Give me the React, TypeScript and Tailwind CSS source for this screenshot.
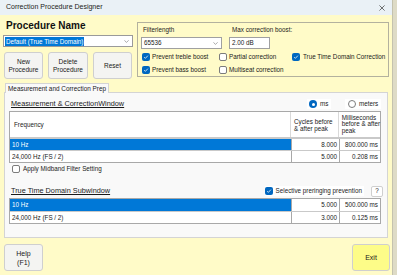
import React from "react";

type Row = { freq: string; cycles: string; ms: string };

const mainRows: Row[] = [
  { freq: "10 Hz", cycles: "8.000", ms: "800.000 ms" },
  { freq: "24,000 Hz (FS / 2)", cycles: "5.000", ms: "0.208 ms" },
];

const subRows: Row[] = [
  { freq: "10 Hz", cycles: "5.000", ms: "500.000 ms" },
  { freq: "24,000 Hz (FS / 2)", cycles: "3.000", ms: "0.125 ms" },
];

function Check({ checked }: { checked?: boolean }) {
  return checked ? (
    <span className="flex h-[8px] w-[8px] shrink-0 items-center justify-center rounded-[2px] bg-[#0067c0]">
      <svg viewBox="0 0 8 8" className="h-[6px] w-[6px]">
        <path d="M1.5 4.2 L3.2 5.8 L6.5 2.2" fill="none" stroke="white" strokeWidth="1" />
      </svg>
    </span>
  ) : (
    <span className="h-[8px] w-[8px] shrink-0 rounded-[2px] border border-[#7c7c7c] bg-white" />
  );
}

function Radio({ selected }: { selected?: boolean }) {
  return selected ? (
    <span className="flex h-[8px] w-[8px] shrink-0 items-center justify-center rounded-full bg-[#0067c0]">
      <span className="h-[3px] w-[3px] rounded-full bg-white" />
    </span>
  ) : (
    <span className="h-[8px] w-[8px] shrink-0 rounded-full border border-[#7c7c7c] bg-white" />
  );
}

function Chevron() {
  return (
    <svg viewBox="0 0 8 5" className="h-[3px] w-[5px] shrink-0">
      <path d="M0.5 0.5 L4 4 L7.5 0.5" fill="none" stroke="#606060" strokeWidth="0.9" />
    </svg>
  );
}

function WinButton({ children, className }: { children: React.ReactNode; className?: string }) {
  return (
    <button
      type="button"
      className={
        "flex flex-col items-center justify-center rounded-[3px] border border-[#cfcfcf] text-[6.5px] leading-[8px] text-[#1a1a1a] " +
        (className ?? "bg-[#f4f4f2]")
      }
    >
      {children}
    </button>
  );
}

function DataRows({ rows }: { rows: Row[] }) {
  return (
    <>
      {rows.map((row, i) => (
        <div key={row.freq} className="flex h-[12px] border-t border-[#c9c9c9] first:border-t-0">
          <div
            className={
              "flex w-[281px] items-center pl-[2px] " +
              (i === 0 ? "bg-[#0078d7] text-white" : "bg-white text-[#1a1a1a]")
            }
          >
            {row.freq}
          </div>
          <div className="flex w-[48px] items-center justify-end border-l border-[#a8a8a8] bg-white pr-[2px]">
            {row.cycles}
          </div>
          <div className="flex flex-1 items-center justify-end border-l border-[#a8a8a8] bg-white pr-[2px]">
            {row.ms}
          </div>
        </div>
      ))}
    </>
  );
}

export default function App() {
  return (
    <div className="flex h-[275px] w-[397px] overflow-hidden bg-[#dedbc6] font-['Liberation_Sans',Arial,sans-serif] text-[6.3px] text-[#1a1a1a]">
      <div className="flex w-[393px] flex-col border-r border-[#c4c2ae] bg-[#fffbc8]">
        {/* Title bar */}
        <div className="flex h-[15px] shrink-0 items-center justify-between bg-[#eaf1f6] pl-[6px] pr-[7px]">
          <span className="text-[7px] text-[#222]">Correction Procedure Designer</span>
          <svg viewBox="0 0 7 7" className="h-[6px] w-[6px]">
            <path d="M0.5 0.5 L6.5 6.5 M6.5 0.5 L0.5 6.5" stroke="#333" strokeWidth="0.8" />
          </svg>
        </div>

        {/* Top section */}
        <div className="flex h-[65px] shrink-0 pl-[3px] pr-[3px]">
          <div className="flex w-[130px] flex-col">
            <div className="mt-[5px] h-[12px] pl-[3px] text-[10px] font-bold leading-[12px] text-[#111]">
              Procedure Name
            </div>
            <div className="mt-[3px] flex h-[12px] items-center justify-between border border-[#9a9a9a] bg-white pl-[1px] pr-[3px]">
              <span className="bg-[#0078d7] px-[1px] leading-[9px] text-white">Default (True Time Domain)</span>
              <Chevron />
            </div>
            <div className="mt-[5px] flex h-[27px] gap-[5px] pl-[1px]">
              <WinButton className="w-[39px] bg-[#f4f4f2]">
                <span>New</span>
                <span>Procedure</span>
              </WinButton>
              <WinButton className="w-[40px] bg-[#f4f4f2]">
                <span>Delete</span>
                <span>Procedure</span>
              </WinButton>
              <WinButton className="w-[39px] bg-[#f4f4f2]">
                <span>Reset</span>
              </WinButton>
            </div>
          </div>

          {/* Filter settings group */}
          <div className="ml-[4px] mt-[7px] flex h-[55px] flex-1 flex-col border border-[#b3b19e] pl-[3px]">
            <div className="mt-[3px] flex h-[8px] items-center leading-[8px]">
              <span className="w-[88px] pl-[2px]">Filterlength</span>
              <span className="pl-[3px]">Max correction boost:</span>
            </div>
            <div className="mt-[3px] flex h-[12px] gap-[7px]">
              <div className="flex w-[81px] items-center justify-between border border-[#a0a0a0] bg-white pl-[2px] pr-[3px]">
                <span>65536</span>
                <Chevron />
              </div>
              <div className="flex w-[41px] items-center border border-[#a0a0a0] bg-white pl-[2px]">2.00 dB</div>
            </div>
            <div className="mt-[3px] flex h-[10px] items-center whitespace-nowrap pl-[1px]">
              <div className="flex w-[77px] items-center gap-[2px]">
                <Check checked />
                <span>Prevent treble boost</span>
              </div>
              <div className="flex w-[73px] items-center gap-[2px]">
                <Check />
                <span>Partial correction</span>
              </div>
              <div className="flex items-center gap-[3px]">
                <Check checked />
                <span>True Time Domain Correction</span>
              </div>
            </div>
            <div className="mt-[3px] flex h-[10px] items-center whitespace-nowrap pl-[1px]">
              <div className="flex w-[77px] items-center gap-[2px]">
                <Check checked />
                <span>Prevent bass boost</span>
              </div>
              <div className="flex items-center gap-[2px]">
                <Check />
                <span>Multiseat correction</span>
              </div>
            </div>
          </div>
        </div>

        {/* Tab strip */}
        <div className="mt-[2px] flex h-[10px] shrink-0 pl-[5px]">
          <div className="relative top-[1px] flex items-center border border-b-0 border-[#d4d4d4] bg-[#f9f9f9] px-[2px] text-[6.4px]">
            Measurement and Correction Prep
          </div>
        </div>

        {/* Tab panel */}
        <div className="mx-[4px] flex h-[146px] shrink-0 flex-col border border-[#d4d4d4] bg-[#f9f9f9] pl-[4px] pr-[6px]">
          <div className="mt-[5px] flex h-[12px] items-center">
            <span className="pl-[2px] text-[7.3px] underline">Measurement &amp; CorrectionWindow</span>
            <div className="ml-auto flex items-center">
              <div className="flex h-[10px] w-[24px] items-center gap-[3px] bg-white pl-[2px]">
                <Radio selected />
                <span>ms</span>
              </div>
              <div className="ml-[14px] flex h-[10px] w-[36px] items-center gap-[3px] bg-white pl-[3px]">
                <Radio />
                <span>meters</span>
              </div>
            </div>
          </div>

          {/* Main table */}
          <div className="mt-[1px] flex flex-col border border-[#a8a8a8] bg-white">
            <div className="flex h-[26px] whitespace-nowrap border-b border-[#c9c9c9]">
              <div className="flex w-[281px] items-center pl-[4px]">Frequency</div>
              <div className="flex w-[48px] items-center border-l border-[#d9d9d9] pl-[3px] leading-[7px]">
                Cycles before
                <br />
                &amp; after peak
              </div>
              <div className="flex flex-1 items-center border-l border-[#d9d9d9] pl-[3px] leading-[6.5px]">
                Milliseconds
                <br />
                before &amp; after
                <br />
                peak
              </div>
            </div>
            <DataRows rows={mainRows} />
          </div>

          <div className="mt-[1px] flex h-[9px] items-center gap-[3px] pl-[3px]">
            <Check />
            <span>Apply Midband Filter Setting</span>
          </div>

          <div className="mt-[12px] flex h-[12px] items-center">
            <span className="pl-[2px] text-[7.3px] underline">True Time Domain Subwindow</span>
            <div className="ml-auto flex h-[10px] items-center gap-[3px] bg-white pr-[2px]">
              <Check checked />
              <span>Selective preringing prevention</span>
            </div>
            <button
              type="button"
              className="ml-[7px] mr-[-2px] flex h-[11px] w-[12px] items-center justify-center rounded-[2px] border border-[#cfcfcf] bg-white"
            >
              ?
            </button>
          </div>

          {/* Subwindow table */}
          <div className="mt-[1px] flex flex-col border border-[#a8a8a8] bg-white">
            <DataRows rows={subRows} />
          </div>
        </div>

        {/* Bottom buttons */}
        <div className="mt-[6px] flex h-[27px] shrink-0 justify-between pl-[4px] pr-[2px]">
          <WinButton className="w-[39px] bg-[#f4f4f2] text-[7px] leading-[9px]">
            <span>Help</span>
            <span>(F1)</span>
          </WinButton>
          <WinButton className="w-[38px] bg-[#fdfc88] text-[7px]">
            <span>Exit</span>
          </WinButton>
        </div>
      </div>
      <div className="flex-1" />
    </div>
  );
}
